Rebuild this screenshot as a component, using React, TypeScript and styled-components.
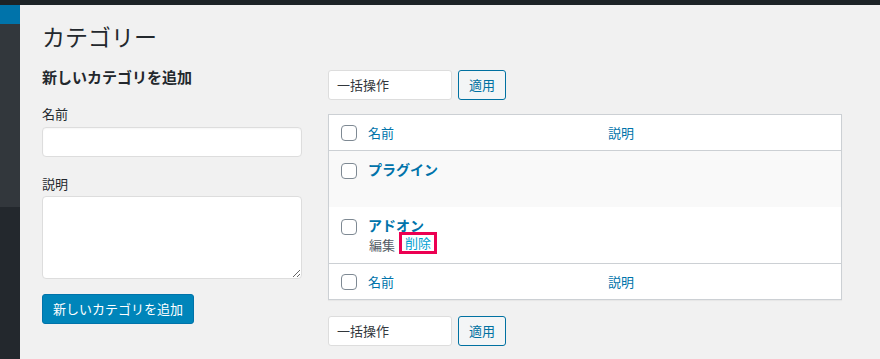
import React from 'react';
import styled, { createGlobalStyle } from 'styled-components';

const GlobalStyle = createGlobalStyle`
  html, body {
    margin: 0;
    padding: 0;
    background: #f1f1f1;
  }
  body {
    font-family: "Noto Sans CJK JP", "Noto Sans", sans-serif;
    color: #23282d;
    font-size: 13px;
  }
`;

export default function App() {
  return (
    <Page>
      <GlobalStyle />
      <AdminBar />
      <Body>
        <Sidebar>
          <MenuCurrent />
          <MenuBlock />
        </Sidebar>
        <Main>
          <Title>カテゴリー</Title>
          <Columns>
            <LeftCol>
              <FormTitle>新しいカテゴリを追加</FormTitle>
              <FieldLabel>名前</FieldLabel>
              <TextInput type="text" />
              <FieldLabel $gap={17}>説明</FieldLabel>
              <TextArea />
              <PrimaryButton>新しいカテゴリを追加</PrimaryButton>
            </LeftCol>
            <RightCol>
              <TableNav>
                <BulkSelect>一括操作</BulkSelect>
                <ApplyButton>適用</ApplyButton>
              </TableNav>
              <Table>
                <HeadRow>
                  <CheckCell><CheckBox /></CheckCell>
                  <HeadLink>名前</HeadLink>
                  <HeadLink>説明</HeadLink>
                </HeadRow>
                <ItemRow $alt>
                  <CheckCell $top><CheckBox /></CheckCell>
                  <NameCell>
                    <RowTitle>プラグイン</RowTitle>
                    <RowActions />
                  </NameCell>
                  <div />
                </ItemRow>
                <ItemRow>
                  <CheckCell $top><CheckBox /></CheckCell>
                  <NameCell>
                    <RowTitle>アドオン</RowTitle>
                    <RowActions>
                      <EditLink>編集</EditLink>
                      <DeleteLink>削除</DeleteLink>
                    </RowActions>
                  </NameCell>
                  <div />
                </ItemRow>
                <HeadRow $foot>
                  <CheckCell><CheckBox /></CheckCell>
                  <HeadLink>名前</HeadLink>
                  <HeadLink>説明</HeadLink>
                </HeadRow>
              </Table>
              <TableNav $bottom>
                <BulkSelect>一括操作</BulkSelect>
                <ApplyButton>適用</ApplyButton>
              </TableNav>
            </RightCol>
          </Columns>
        </Main>
      </Body>
    </Page>
  );
}

const Page = styled.div`
  width: 880px;
  height: 359px;
  overflow: hidden;
  display: flex;
  flex-direction: column;
`;
const AdminBar = styled.div`
  height: 5px;
  background: #1d2327;
  flex-shrink: 0;
`;
const Body = styled.div`
  flex: 1;
  display: flex;
`;
const Sidebar = styled.div`
  width: 20px;
  background: #23282d;
  display: flex;
  flex-direction: column;
`;
const MenuCurrent = styled.div`
  height: 19px;
  background: #0073aa;
`;
const MenuBlock = styled.div`
  height: 183px;
  background: #32373c;
`;
const Main = styled.div`
  flex: 1;
  padding: 17px 22px 0;
`;
const Title = styled.h1`
  margin: 0;
  font-size: 23px;
  font-weight: 400;
  line-height: 29px;
  color: #23282d;
`;
const Columns = styled.div`
  display: grid;
  grid-template-columns: 260px 514px;
  column-gap: 26px;
  margin-top: 15px;
`;
const LeftCol = styled.div`
  display: flex;
  flex-direction: column;
  align-items: flex-start;
`;
const FormTitle = styled.h2`
  margin: 0;
  font-size: 15px;
  font-weight: 700;
  line-height: 22px;
  color: #23282d;
`;
const FieldLabel = styled.label<{ $gap?: number }>`
  margin-top: ${p => p.$gap ?? 16}px;
  font-size: 13px;
  line-height: 20px;
  color: #23282d;
`;
const TextInput = styled.input`
  box-sizing: border-box;
  margin: 3px 0 0;
  width: 260px;
  height: 30px;
  background: #fff;
  border: 1px solid #ddd;
  border-radius: 4px;
  box-shadow: inset 0 1px 2px rgba(0, 0, 0, 0.04);
  outline: none;
`;
const TextArea = styled.textarea`
  box-sizing: border-box;
  margin: 2px 0 0;
  width: 260px;
  height: 83px;
  background: #fff;
  border: 1px solid #ddd;
  border-radius: 4px;
  outline: none;
  font-family: inherit;
`;
const PrimaryButton = styled.button`
  margin-top: 15px;
  height: 30px;
  padding: 0 10px;
  background: #0085ba;
  border: 1px solid #0073aa;
  border-radius: 3px;
  color: #fff;
  font-family: inherit;
  font-size: 13px;
  line-height: 28px;
  cursor: pointer;
`;
const RightCol = styled.div`
  display: flex;
  flex-direction: column;
  padding-top: 4px;
`;
const TableNav = styled.div<{ $bottom?: boolean }>`
  display: flex;
  gap: 6px;
  margin-top: ${p => (p.$bottom ? 16 : 0)}px;
`;
const BulkSelect = styled.div`
  box-sizing: border-box;
  width: 124px;
  height: 30px;
  padding: 0 8px;
  background: #fff;
  border: 1px solid #ddd;
  border-radius: 3px;
  font-size: 13px;
  line-height: 28px;
  color: #32373c;
`;
const ApplyButton = styled.button`
  box-sizing: border-box;
  width: 48px;
  height: 30px;
  padding: 0;
  background: #f3f5f6;
  border: 1px solid #0071a1;
  border-radius: 3px;
  color: #0071a1;
  font-family: inherit;
  font-size: 13px;
  line-height: 28px;
`;
const Table = styled.div`
  margin-top: 14px;
  background: #fff;
  border: 1px solid #ccd0d4;
  box-shadow: 0 1px 1px rgba(0, 0, 0, 0.04);
`;
const HeadRow = styled.div<{ $foot?: boolean }>`
  display: grid;
  grid-template-columns: 39px 240px 1fr;
  align-items: center;
  height: 35px;
  border-${p => (p.$foot ? 'top' : 'bottom')}: 1px solid #ccd0d4;
`;
const ItemRow = styled.div<{ $alt?: boolean }>`
  display: grid;
  grid-template-columns: 39px 240px 1fr;
  padding: 8px 0;
  background: ${p => (p.$alt ? '#f9f9f9' : '#fff')};
`;
const CheckCell = styled.div<{ $top?: boolean }>`
  display: flex;
  padding-left: 12px;
  padding-top: ${p => (p.$top ? 4 : 0)}px;
  align-items: ${p => (p.$top ? 'flex-start' : 'center')};
`;
const CheckBox = styled.span`
  box-sizing: border-box;
  width: 16px;
  height: 16px;
  background: #fff;
  border: 1px solid #7e8993;
  border-radius: 4px;
`;
const HeadLink = styled.span`
  font-size: 13px;
  line-height: 20px;
  color: #0073aa;
`;
const NameCell = styled.div`
  display: flex;
  flex-direction: column;
`;
const RowTitle = styled.span`
  font-size: 14px;
  font-weight: 600;
  line-height: 20px;
  color: #0073aa;
`;
const RowActions = styled.div`
  display: flex;
  align-items: flex-end;
  height: 20px;
  font-size: 13px;
`;
const EditLink = styled.span`
  color: #555d66;
  line-height: 20px;
  margin-left: 1px;
`;
const DeleteLink = styled.span`
  box-sizing: border-box;
  display: flex;
  align-items: center;
  margin: 0 0 1px 4px;
  height: 22px;
  padding: 0 3px 2px;
  border: 3px solid #ec0052;
  background: #fff;
  color: #00a0d2;
  line-height: 13px;
`;
